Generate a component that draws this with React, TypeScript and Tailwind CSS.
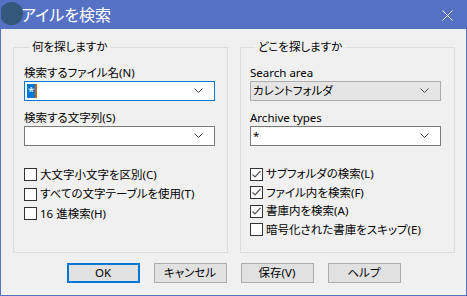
import React from 'react';

const font = "font-['Noto_Sans','Noto_Sans_CJK_JP',sans-serif] [font-feature-settings:'palt']";

function Chevron() {
    return (
        <svg width="9" height="6" viewBox="0 0 9 6" className="shrink-0">
            <polyline points="0.5,0.5 4.5,4.5 8.5,0.5" fill="none" stroke="#444" strokeWidth="1" />
        </svg>
    );
}

function Combo({ children, focused = false, gray = false }: { children?: React.ReactNode; focused?: boolean; gray?: boolean }) {
    const border = focused ? 'border-[#0078d7]' : gray ? 'border-[#adadad]' : 'border-[#7a7a7a]';
    const bg = gray ? 'bg-[#e5e5e5]' : 'bg-white';
    return (
        <div className={`w-[191px] h-[20px] border ${border} ${bg} flex items-center pl-[2px] pr-[11px]`}>
            <div className="flex-1 flex items-center text-[11.5px] leading-4 text-black">{children}</div>
            <Chevron />
        </div>
    );
}

function Check({ label, checked = false }: { label: string; checked?: boolean }) {
    return (
        <div className="flex items-center gap-[3px] h-[19.5px]">
            <div className="w-[13px] h-[13px] border border-[#333] bg-white flex items-center justify-center">
                {checked && (
                    <svg width="11" height="11" viewBox="0 0 11 11">
                        <polyline points="1.5,5.5 4,8 9.5,2" fill="none" stroke="#555" strokeWidth="1.2" />
                    </svg>
                )}
            </div>
            <span className="text-[11.5px] leading-4 text-black">{label}</span>
        </div>
    );
}

function Group({ title, children, pl }: { title: string; children: React.ReactNode; pl: string }) {
    return (
        <fieldset className={`w-[215px] h-[214px] border border-[#dcdcdc] ${pl}`}>
            <legend className="ml-[5px] px-[3px] text-[11.5px] leading-4 text-black">{title}</legend>
            {children}
        </fieldset>
    );
}

function Button({ label, primary = false }: { label: string; primary?: boolean }) {
    return (
        <button
            className={`w-[73px] h-[20px] bg-[#e1e1e1] text-[11.5px] leading-4 text-black flex items-center justify-center ${primary ? 'border-2 border-[#0078d7]' : 'border border-[#adadad]'}`}
        >
            {label}
        </button>
    );
}

export default function App() {
    return (
        <div className={`w-[467px] h-[296px] bg-[#f0f0f0] border-x border-b border-[#5571c4] flex flex-col overflow-hidden ${font}`}>
            {/* Title bar */}
            <div className="relative h-[29px] -mx-px bg-[#5571c4] flex items-center shrink-0">
                <div className="absolute left-0 top-[2px] w-[23px] h-[23px] rounded-full bg-[#33587c]"></div>
                <span className="ml-[21px] text-[16px] leading-5 text-white">アイルを検索</span>
                <svg width="11" height="11" viewBox="0 0 11 11" className="ml-auto mr-[14px] mt-[2px]">
                    <path d="M0.5 0.5 L10.5 10.5 M10.5 0.5 L0.5 10.5" stroke="#fff" strokeWidth="1" />
                </svg>
            </div>

            {/* Groups */}
            <div className="flex gap-[12px] pl-[12px] pt-[10px]">
                <Group title="何を探しますか" pl="pl-[10px]">
                    <div className="pt-[10px] text-[11.5px] leading-4 text-black">検索するファイル名(N)</div>
                    <Combo focused>
                        <span className="bg-[#0078d7] text-white px-[1px] leading-[14px]">*</span>
                        <span className="w-[2px] h-[14px] bg-[#c0671c]"></span>
                    </Combo>
                    <div className="mt-[9px] text-[11.5px] leading-4 text-black">検索する文字列(S)</div>
                    <Combo />
                    <div className="mt-[19px]">
                        <Check label="大文字小文字を区別(C)" />
                        <Check label="すべての文字テーブルを使用(T)" />
                        <Check label="16 進検索(H)" />
                    </div>
                </Group>
                <Group title="どこを探しますか" pl="pl-[9px]">
                    <div className="pt-[10px] text-[11.5px] leading-4 text-black">Search area</div>
                    <Combo gray>カレントフォルダ</Combo>
                    <div className="mt-[9px] text-[11.5px] leading-4 text-black">Archive types</div>
                    <Combo>*</Combo>
                    <div className="mt-[19px] [&>div]:h-[18.5px]">
                        <Check label="サブフォルダの検索(L)" checked />
                        <Check label="ファイル内を検索(F)" checked />
                        <Check label="書庫内を検索(A)" checked />
                        <Check label="暗号化された書庫をスキップ(E)" />
                    </div>
                </Group>
            </div>

            {/* Buttons */}
            <div className="flex justify-center gap-[14px] mt-[10px]">
                <Button label="OK" primary />
                <Button label="キャンセル" />
                <Button label="保存(V)" />
                <Button label="ヘルプ" />
            </div>
        </div>
    );
}
